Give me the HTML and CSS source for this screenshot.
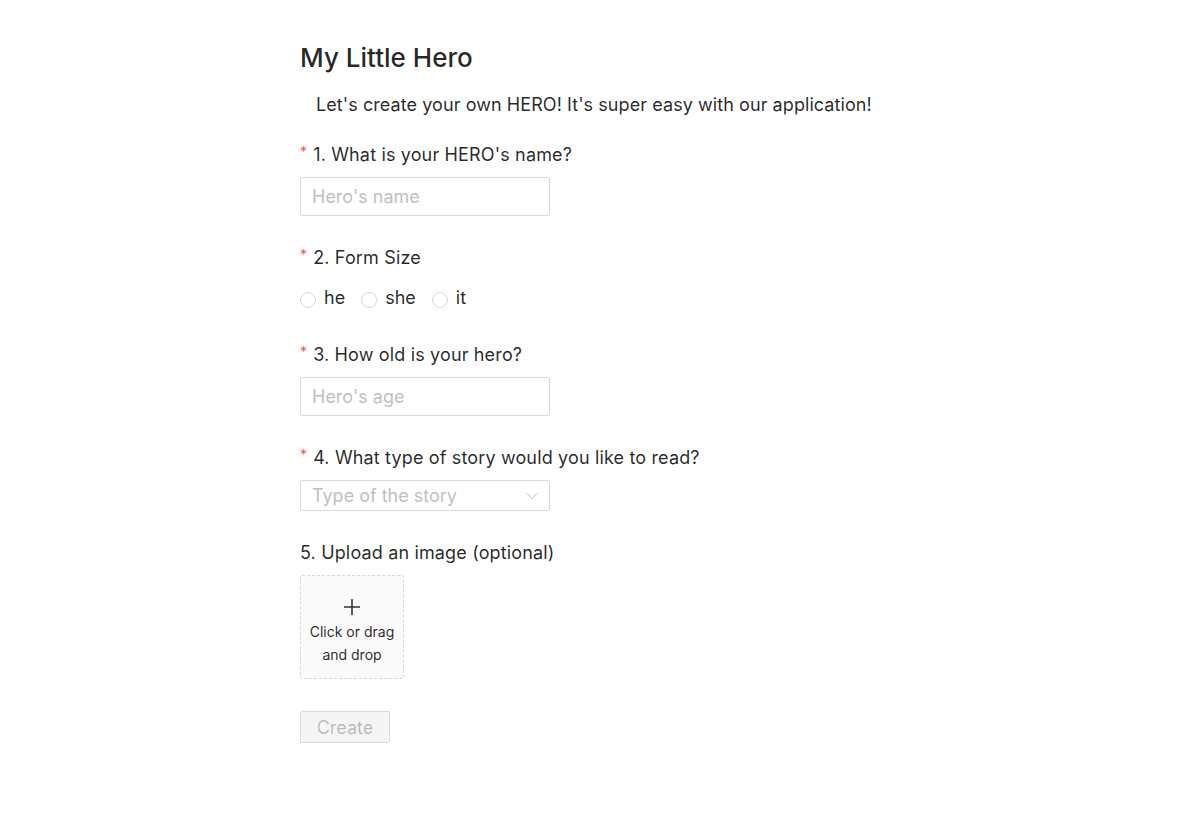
FILE: index.html
```html
<!DOCTYPE html>
<html>
<head>
<meta charset="utf-8">
<link rel="stylesheet" href="styles.css">
</head>
<body>
<main class="page">
  <h1 class="title">My Little Hero</h1>
  <p class="intro">Let's create your own HERO! It's super easy with our application!</p>
  <form class="form">
    <div class="field">
      <label class="label"><span class="req">*</span>1. What is your HERO's name?</label>
      <input class="input" type="text" placeholder="Hero's name">
    </div>
    <div class="field field-radio">
      <label class="label"><span class="req">*</span>2. Form Size</label>
      <div class="radios">
        <label class="radio"><span class="dot"></span>he</label>
        <label class="radio"><span class="dot"></span>she</label>
        <label class="radio"><span class="dot"></span>it</label>
      </div>
    </div>
    <div class="field">
      <label class="label"><span class="req">*</span>3. How old is your hero?</label>
      <input class="input" type="text" placeholder="Hero's age">
    </div>
    <div class="field field-select">
      <label class="label"><span class="req">*</span>4. What type of story would you like to read?</label>
      <div class="select"><span class="ph">Type of the story</span>
        <svg class="arrow" width="12" height="8" viewBox="0 0 12 8"><path d="M1 1.5 L6 6.5 L11 1.5" fill="none" stroke="#bfbfbf" stroke-width="1"/></svg>
      </div>
    </div>
    <div class="field">
      <label class="label">5. Upload an image (optional)</label>
      <div class="upload">
        <svg width="18" height="18" viewBox="0 0 18 18"><path d="M9 1 V17 M1 9 H17" stroke="#333" stroke-width="1.6"/></svg>
        <span>Click or drag and drop</span>
      </div>
    </div>
    <div class="actions">
      <button class="btn" type="button" disabled>Create</button>
    </div>
  </form>
</main>
</body>
</html>
```
FILE: styles.css
```css
* { box-sizing: border-box; }
body {
  margin: 0;
  background: #fff;
  font-family: Inter, "Helvetica Neue", Arial, sans-serif;
  color: rgba(0,0,0,0.85);
}
.page {
  width: 600px;
  margin-left: 300px;
  padding-top: 40px;
}
.title {
  margin: 0;
  font-size: 26px;
  font-weight: 500;
  line-height: 36px;
  color: rgba(0,0,0,0.85);
}
.intro {
  margin: 15px 0 0 16px;
  font-size: 18px;
  line-height: 28px;
  letter-spacing: 0.07px;
}
.form { display: flex; flex-direction: column; margin-top: 18px; }
.field { display: flex; flex-direction: column; margin-bottom: 24px; }
.field-radio { margin-bottom: 28px; }
.field-select { margin-bottom: 27px; }
.label {
  font-size: 18px;
  line-height: 30px;
  margin-bottom: 7px;
  letter-spacing: 0.15px;
}
.req {
  color: #ff4d4f;
  font-size: 14px;
  margin-right: 6px;
  vertical-align: 4px;
}
.input {
  width: 250px;
  height: 39px;
  border: 1px solid #d9d9d9;
  border-radius: 2px;
  padding: 0 11px;
  font-family: inherit;
  font-size: 18px;
  color: rgba(0,0,0,0.85);
  outline: none;
}
.input::placeholder { color: #bfbfbf; }
.radios { display: flex; align-items: center; height: 24px; margin-top: 5px; }
.radio {
  display: flex;
  align-items: center;
  font-size: 18px;
  margin-right: 16px;
}
.dot {
  width: 16px; height: 16px;
  border: 1px solid #d9d9d9;
  border-radius: 50%;
  margin-right: 8px;
  margin-top: 6px;
  background: #fff;
}
.select {
  width: 250px;
  height: 31px;
  border: 1px solid #d9d9d9;
  border-radius: 2px;
  padding: 0 11px;
  display: flex;
  align-items: center;
  justify-content: space-between;
  font-size: 18px;
}
.ph { color: #bfbfbf; }
.arrow { margin-top: 1px; }
.upload {
  width: 104px; height: 104px;
  border: 1px dashed #d9d9d9;
  border-radius: 2px;
  background: #fafafa;
  display: flex;
  flex-direction: column;
  align-items: center;
  justify-content: center;
  text-align: center;
  font-size: 14px;
  line-height: 23px;
  color: rgba(0,0,0,0.85);
  padding: 10px 6px 0;
}
.upload svg { margin-bottom: 4px; }
.actions { margin-top: 8px; }
.btn {
  width: 90px;
  height: 32px;
  font-family: inherit;
  font-size: 18px;
  color: rgba(0,0,0,0.25);
  background: #f5f5f5;
  border: 1px solid #d9d9d9;
  border-radius: 2px;
  padding: 0;
}
```
